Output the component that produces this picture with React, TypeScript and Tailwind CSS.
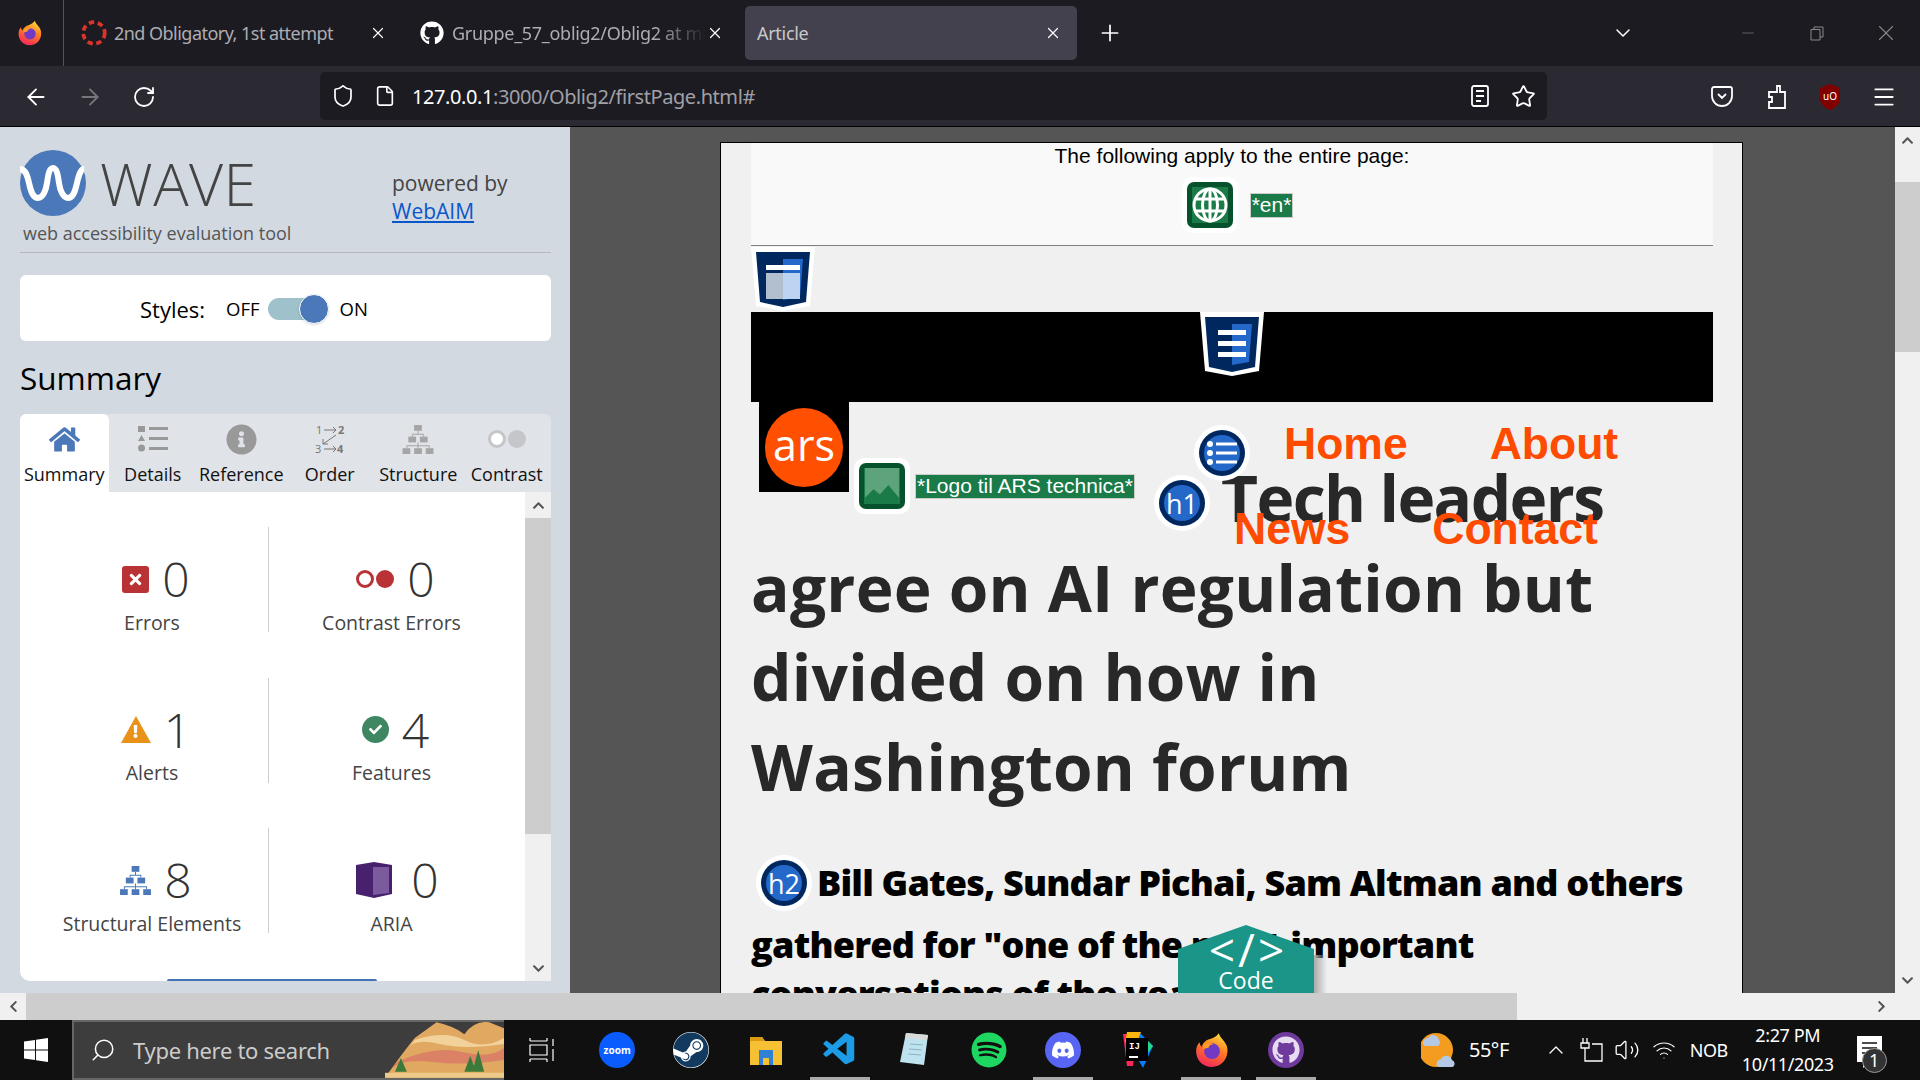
import type { ReactNode } from "react";
import { FaHome, FaInfoCircle, FaGithub, FaSpotify, FaDiscord, FaSteam, FaChevronUp, FaChevronDown, FaChevronLeft, FaChevronRight, FaCheck, FaExclamation, FaTimes } from "react-icons/fa";
import { VscVscode } from "react-icons/vsc";
import { ArrowLeft, ArrowRight, RotateCw, Shield, File, Star, Search, Menu, X, Plus, ChevronDown, ChevronUp, Minus, Volume2, Wifi } from "lucide-react";

function Firefox({ size = 24 }: { size?: number }) {
  return (
    <svg width={size} height={size} viewBox="0 0 32 32">
      <defs>
        <linearGradient id="ffx" x1="0.7" y1="0" x2="0.3" y2="1">
          <stop offset="0" stopColor="#ffd93b" />
          <stop offset="0.45" stopColor="#ff7a22" />
          <stop offset="1" stopColor="#f5255e" />
        </linearGradient>
      </defs>
      <path d="M22 1c1 4 5 6 7 11 3 9-3 19-13 19C7 31 1 24 2 15c.5-3 2-5 3-6 0 2 1 3 2 4 1-4 4-6 8-7 2-1 5-2 7-5z" fill="url(#ffx)" />
      <circle cx="16" cy="17" r="7" fill="#7139c4" />
      <path d="M8 11c3-2 7-2 9 0-2 0-4 1-4 3l-5 1z" fill="#ff9a24" />
    </svg>
  );
}

function Shield2({ variant }: { variant: "page" | "nav" }) {
  return (
    <svg width="64" height="64" viewBox="0 0 64 64">
      <path d="M0 0H64L59 59L32 64L5 59Z" fill="#fff" />
      <path d="M5 5H59L55 55L32 60L9 55Z" fill="#00285f" />
      <path d="M32 12H52L49 50L32 53Z" fill="#2468c9" />
      {variant === "page" ? (
        <g>
          <rect x="15" y="18" width="34" height="5" fill="#fff" />
          <rect x="15" y="26" width="17" height="26" fill="#b2bfcf" />
          <rect x="32" y="26" width="17" height="26" fill="#bcd3f2" />
        </g>
      ) : (
        <g fill="#fff">
          <rect x="18" y="18" width="28" height="5" />
          <rect x="18" y="29" width="28" height="5" />
          <rect x="18" y="40" width="28" height="5" />
        </g>
      )}
    </svg>
  );
}

function GreenIcon({ children }: { children: ReactNode }) {
  return (
    <div className="w-[56px] h-[56px] shrink-0 rounded-[10px] bg-white p-[5px]">
      <div className="w-full h-full rounded-[7px] bg-[#06522c] p-[5px]">
        <div className="w-full h-full bg-[#1a7a48] flex items-center justify-center overflow-hidden">{children}</div>
      </div>
    </div>
  );
}

function RoundIcon({ children }: { children: ReactNode }) {
  return (
    <div className="w-[56px] h-[56px] rounded-full bg-white p-[5px]">
      <div className="w-full h-full rounded-full bg-[#00285f] p-[5px]">
        <div className="w-full h-full rounded-full bg-[#2468c9] flex items-center justify-center text-white text-[27px] leading-none font-['Open_Sans',sans-serif] font-normal tracking-normal">
          {children}
        </div>
      </div>
    </div>
  );
}

function TabClose() {
  return <X size={18} strokeWidth={1.6} className="text-white" />;
}

function SummaryCell({ icon, value, label, border, gap = "gap-[13px]" }: { icon: ReactNode; value: string; label: string; border?: boolean; gap?: string }) {
  return (
    <div className={`h-[105px] flex flex-col items-center ${border ? "border-l border-[#cccccc]" : ""}`}>
      <div className={`flex items-center ${gap} h-[62px] mt-[22px] pl-[8px]`}>
        {icon}
        <span className="text-[48px] leading-none font-light text-[#333]">{value}</span>
      </div>
      <span className="text-[19.5px] leading-none text-[#444] mt-[3px]">{label}</span>
    </div>
  );
}

function Hierarchy({ color, width, height }: { color: string; width: number; height: number }) {
  return (
    <svg width={width} height={height} viewBox="0 0 32 30" fill={color}>
      <rect x="12" y="0" width="8" height="6" />
      <rect x="6" y="12" width="8" height="6" />
      <rect x="18" y="12" width="8" height="6" />
      <rect x="0" y="24" width="8" height="6" />
      <rect x="12" y="24" width="8" height="6" />
      <rect x="24" y="24" width="8" height="6" />
      <path d="M16 6v3M10 9h12v3h-1v-2H11v2h-1zM4 21h24v3h-1v-2H5v2H4zM15.500 18h1v6h-1zM15.500 6h1v4h-1z" />
    </svg>
  );
}

function ContrastDots({ ring, fill }: { ring: string; fill: string }) {
  return (
    <div className="flex items-center gap-[2px]">
      <div className="w-[18px] h-[18px] rounded-full border-[3px] bg-white" style={{ borderColor: ring }} />
      <div className="w-[18px] h-[18px] rounded-full" style={{ backgroundColor: fill }} />
    </div>
  );
}

const tabs: { label: string; icon: ReactNode }[] = [
  { label: "Summary", icon: <FaHome size={31} className="text-[#4a78b8]" /> },
  {
    label: "Details",
    icon: (
      <svg width="30" height="30" viewBox="0 0 30 30" fill="#999">
        <rect x="0" y="2" width="7" height="6" />
        <path d="M3.500 11L7 17H0z" />
        <circle cx="3.500" cy="24" r="3.500" />
        <rect x="11" y="3" width="19" height="3" />
        <rect x="11" y="13" width="19" height="3" />
        <rect x="11" y="23" width="19" height="3" />
      </svg>
    ),
  },
  { label: "Reference", icon: <FaInfoCircle size={31} className="text-[#999]" /> },
  {
    label: "Order",
    icon: (
      <svg width="30" height="30" viewBox="0 0 30 30" fill="#777" stroke="none" fontFamily="Open Sans, sans-serif" fontSize="11">
        <text x="1" y="10">1</text>
        <text x="23" y="10" fontWeight="700">2</text>
        <text x="0" y="29">3</text>
        <text x="22" y="29" fontWeight="700">4</text>
        <path d="M9 6h12M18 3l3 3-3 3M9 25h12M18 22l3 3-3 3M21 11L8 20M8 15v5h5" fill="none" stroke="#777" strokeWidth="1" />
      </svg>
    ),
  },
  { label: "Structure", icon: <Hierarchy color="#a5a5a5" width={32} height={29} /> },
  {
    label: "Contrast",
    icon: <ContrastDots ring="#c4c6c9" fill="#c4c6c9" />,
  },
];

function Sidebar() {
  return (
    <aside className="w-[570px] shrink-0 bg-[#d3d9e1] px-[20px] pr-[19px] font-['Open_Sans',sans-serif]">
      <div className="h-[126px] border-b border-[#b5b9be] flex">
        <div className="w-[372px] pt-[23px]">
          <div className="flex items-center h-[65px]">
            <svg width="66" height="66" viewBox="0 0 66 66">
              <circle cx="33" cy="33" r="33" fill="#4a78b8" />
              <path d="M1 18c5 0 7 5 9 14s4 15 9 15 8-8 9-15 2-15 6-15 5 8 6 15 4 15 9 15 7-6 9-15 4-14 7-14" transform="translate(-1 1)" fill="none" stroke="#fff" strokeWidth="6" />
            </svg>
            <span className="ml-[14px] mt-[2px] text-[59px] leading-none font-light text-[#444] tracking-[0.5px]">WAVE</span>
          </div>
          <div className="ml-[3px] mt-[6px] text-[18px] leading-[24px] text-[#555]">web accessibility evaluation tool</div>
        </div>
        <div className="pt-[42px] text-[21px] leading-[28px] text-[#444]">
          <div>powered by</div>
          <div className="text-[#0b57c9] underline">WebAIM</div>
        </div>
      </div>

      <div className="mt-[22px] h-[66px] pt-[2px] rounded-[6px] bg-white flex items-center text-black">
        <span className="ml-[120px] text-[22px]">Styles:</span>
        <span className="ml-[21px] text-[18.500px]">OFF</span>
        <div className="relative ml-[8px] w-[58px] h-[22px] rounded-full bg-[#9fc1cc]">
          <div className="absolute right-[-3px] top-[-4px] w-[30px] h-[30px] rounded-full bg-[#4a78b8] border border-white shadow" />
        </div>
        <span className="ml-[14px] text-[18.500px]">ON</span>
      </div>

      <h2 className="mt-[15px] text-[31.500px] leading-[44px] text-black">Summary</h2>

      <div className="mt-[14px] h-[78px] rounded-t-[6px] bg-[#e0e3e8] grid grid-cols-6">
        {tabs.map((tab, i) => (
          <div key={tab.label} className={`flex flex-col items-center ${i === 0 ? "bg-white rounded-t-[6px]" : ""}`}>
            <div className="h-[32px] mt-[9px] flex items-center justify-center">{tab.icon}</div>
            <span className="mt-[8px] text-[18px] leading-[22px] text-[#111] whitespace-nowrap">{tab.label}</span>
          </div>
        ))}
      </div>

      <div className="h-[489px] flex">
        <div className="relative w-[505px] bg-white rounded-bl-[10px] pl-[16px] pr-[11px] pt-[35px] overflow-hidden">
          <div className="grid grid-cols-[232px_246px] gap-y-[45.500px]">
            <SummaryCell
              value="0"
              label="Errors"
              icon={
                <div className="w-[27px] h-[27px] rounded-[3px] bg-[#b83236] flex items-center justify-center">
                  <FaTimes size={17} className="text-white" />
                </div>
              }
            />
            <SummaryCell border value="0" label="Contrast Errors" icon={<ContrastDots ring="#b83236" fill="#b83236" />} />
            <SummaryCell
              value="1"
              label="Alerts"
              icon={
                <div className="relative w-[30px] h-[27px]">
                  <svg width="30" height="27" viewBox="0 0 30 27">
                    <path d="M15 0L30 27H0z" fill="#e8921a" />
                  </svg>
                  <FaExclamation size={13} className="absolute left-[8.500px] top-[9px] text-white" />
                </div>
              }
            />
            <SummaryCell
              border
              value="4"
              label="Features"
              icon={
                <div className="w-[27px] h-[27px] rounded-full bg-[#3f8763] flex items-center justify-center">
                  <FaCheck size={13} className="text-white" />
                </div>
              }
            />
            <SummaryCell value="8" label="Structural Elements" icon={<Hierarchy color="#4a78b8" width={31} height={29} />} />
            <SummaryCell
              border
              value="0"
              label="ARIA"
              gap="gap-[19px]"
              icon={
                <svg className="ml-[4px]" width="36" height="36" viewBox="0 0 36 36">
                  <path d="M0 3L18 0l18 3v29l-18 4-18-4z" fill="#47206e" />
                  <path d="M17 5l16-0v26l-16 2z" fill="#7b5a9e" />
                </svg>
              }
            />
          </div>
          <div className="absolute left-[147px] bottom-0 w-[210px] h-[2px] rounded-t bg-[#4472b5]" />
        </div>
        <div className="w-[26px] bg-[#f0f0f0] flex flex-col">
          <div className="h-[26px] flex items-center justify-center">
            <FaChevronUp size={13} className="text-[#555]" />
          </div>
          <div className="h-[316px] bg-[#cdcdcd]" />
          <div className="flex-1" />
          <div className="h-[26px] flex items-center justify-center">
            <FaChevronDown size={13} className="text-[#555]" />
          </div>
        </div>
      </div>
    </aside>
  );
}

function Article() {
  return (
    <main className="relative flex-1 bg-[#555555] overflow-hidden pt-[15px] pl-[150px]">
      <div className="w-[1023px] h-[1000px] border border-black bg-[#f0f0f0] pl-[30px] pr-[29px]">
        <div className="h-[103px] bg-[#f9f9f9] border-b border-[#808080] flex flex-col items-center font-['Liberation_Sans',sans-serif] text-black">
          <p className="text-[21px] leading-[24px] mt-[1px] whitespace-nowrap">The following apply to the entire page:</p>
          <div className="flex items-center gap-[12px] mt-[9px] ml-[11px]">
            <GreenIcon>
              <svg width="36" height="36" viewBox="0 0 36 36" fill="none" stroke="#fff" strokeWidth="3">
                <circle cx="18" cy="18" r="16" />
                <ellipse cx="18" cy="18" rx="7.500" ry="16" />
                <path d="M4 12H32M4 24H32M18 2V34" />
              </svg>
            </GreenIcon>
            <span className="h-[25px] px-[1px] bg-[#1a7a48] border border-[#ccc] text-white text-[21px] leading-[22px]">*en*</span>
          </div>
        </div>

        <div className="h-[66px] pt-[1px]">
          <Shield2 variant="page" />
        </div>
        <div className="h-[90px] bg-black flex justify-center">
          <Shield2 variant="nav" />
        </div>

        <div className="relative">
          <div className="absolute left-[8px] top-0 w-[90px] h-[90px] bg-black flex items-center justify-center">
            <div className="w-[78px] h-[79px] rounded-full bg-[#ff4f00] flex items-center justify-center text-white text-[43px] leading-none font-['Open_Sans',sans-serif] pb-[5px]">
              ars
            </div>
          </div>
          <div className="absolute left-[103px] top-[56px] flex items-center gap-[5px] font-['Liberation_Sans',sans-serif]">
            <GreenIcon>
              <svg width="34" height="36" viewBox="0 0 32 34">
                <rect width="32" height="34" fill="#5da37c" />
                <path d="M0 34V28L8 20L14 25L22 16L32 28V34Z" fill="#1a7a48" />
              </svg>
            </GreenIcon>
            <span className="h-[25px] px-[1px] bg-[#1a7a48] border border-[#ccc] text-white text-[21px] leading-[22px] whitespace-nowrap">*Logo til ARS technica*</span>
          </div>

          <h1 className="pt-[51px] text-[64px] leading-[89.600px] font-bold text-[#282828] indent-[470px] font-['Open_Sans',sans-serif] tracking-[0.250px]">
            <span className="tracking-[-1.600px]">Tech leaders</span>
            <br />
            agree on AI regulation but
            <br />
            divided on how in
            <br />
            Washington forum
          </h1>

          <div className="absolute left-[533px] top-[17px] font-['Liberation_Sans',sans-serif] font-bold text-[44.500px] leading-[50px] text-[#ff4b00] whitespace-nowrap">
            <div>
              Home<span className="ml-[82px]">About</span>
            </div>
            <div className="-ml-[50px] mt-[35px]">
              News<span className="ml-[82px]">Contact</span>
            </div>
          </div>
          <div className="absolute left-[443px] top-[23px]">
            <RoundIcon>
              <svg width="30" height="24" viewBox="0 0 30 24" fill="#fff">
                <circle cx="3" cy="3" r="3" />
                <circle cx="3" cy="12" r="3" />
                <circle cx="3" cy="21" r="3" />
                <rect x="9" y="1.500" width="21" height="3" />
                <rect x="9" y="10.500" width="21" height="3" />
                <rect x="9" y="19.500" width="21" height="3" />
              </svg>
            </RoundIcon>
          </div>
          <div className="absolute left-[403px] top-[73px]">
            <RoundIcon>h1</RoundIcon>
          </div>

          <div className="relative mt-[41px]">
            <h2 className="text-[36px] font-extrabold text-black font-['Open_Sans',sans-serif] tracking-[-0.800px] whitespace-nowrap">
              <span className="block leading-[62px] indent-[66px]">Bill Gates, Sundar Pichai, Sam Altman and others</span>
              <span className="block leading-[62px]">gathered for "one of the most important</span>
              <span className="block leading-[36px]">conversations of the year"</span>
            </h2>
            <div className="absolute left-[5px] top-[3px]">
              <RoundIcon>h2</RoundIcon>
            </div>
          </div>
        </div>
      </div>

      <div className="absolute left-[744px] top-[828px] w-[13px] h-[60px] bg-gradient-to-r from-[#aaaaaa] to-transparent" />
      <div className="absolute left-[608px] top-[798px] w-[136px] h-[90px] bg-[#1a9588] [clip-path:polygon(50%_0,100%_24px,100%_100%,0_100%,0_24px)] flex flex-col items-center text-white font-['Open_Sans',sans-serif]">
        <span className="text-[46px] leading-none mt-[1px] pl-[4px] tracking-[3px]">&lt;/&gt;</span>
        <span className="text-[23px] leading-none -mt-[3px]">Code</span>
      </div>
    </main>
  );
}

function Taskbar() {
  const slots: { x: string; node: ReactNode; active?: boolean }[] = [
    {
      x: "zoom",
      node: (
        <div className="w-[36px] h-[36px] rounded-full bg-[#0b5cff] flex items-center justify-center text-white text-[10px] font-bold">zoom</div>
      ),
    },
    {
      x: "steam",
      node: (
        <div className="w-[36px] h-[36px] rounded-full bg-white flex items-center justify-center">
          <FaSteam size={36} className="text-[#123a5e]" />
        </div>
      ),
    },
    {
      x: "files",
      node: (
        <svg width="32" height="32" viewBox="0 0 32 32">
          <path d="M0 3h12l3 4h17v24H0z" fill="#f5c033" />
          <path d="M0 3h12l3 4H0z" fill="#d99a14" />
          <rect x="9" y="16" width="14" height="15" fill="#2e82d6" />
          <rect x="13" y="24" width="6" height="7" fill="#f5c033" />
        </svg>
      ),
    },
    { x: "code", active: true, node: <VscVscode size={38} className="text-[#1c9be6]" /> },
    {
      x: "notepad",
      node: (
        <svg width="32" height="36" viewBox="0 0 32 36">
          <path d="M8 1L30 3L26 33L2 30z" fill="#bfe3ee" />
          <path d="M8 1L30 3L29 8L7 6z" fill="#d9d9d9" />
          <path d="M12 12L25 13M11 17L24 18M10 22L23 23" stroke="#8ab4c2" />
        </svg>
      ),
    },
    { x: "spotify", node: <FaSpotify size={36} className="text-[#1ed760]" /> },
    {
      x: "discord",
      active: true,
      node: (
        <div className="w-[36px] h-[36px] rounded-full bg-[#5865f2] flex items-center justify-center">
          <FaDiscord size={24} className="text-white" />
        </div>
      ),
    },
    {
      x: "idea",
      node: (
        <svg width="36" height="36" viewBox="0 0 36 36">
          <path d="M4 2h14l-4 32H8z" fill="#fe2857" />
          <path d="M20 0l14 14-10 22-8-14z" fill="#087cfa" />
          <path d="M26 6l8 8-6 8z" fill="#21d789" />
          <path d="M8 0h14l-4 10H6z" fill="#fdb60d" />
          <rect x="7" y="6" width="22" height="23" fill="#000" />
          <text x="10" y="17" fontSize="9" fontWeight="700" fill="#fff" fontFamily="Liberation Mono, monospace">IJ</text>
          <rect x="10" y="24" width="9" height="2" fill="#fff" />
        </svg>
      ),
    },
    { x: "firefox", active: true, node: <Firefox size={36} /> },
    {
      x: "github",
      active: true,
      node: (
        <div className="w-[36px] h-[36px] rounded-full bg-[#6e3a9e] flex items-center justify-center">
          <FaGithub size={28} className="text-[#e8dcf2]" />
        </div>
      ),
    },
  ];
  return (
    <footer className="h-[60px] bg-[#101010] flex text-white font-['Noto_Sans',sans-serif]">
      <div className="w-[72px] flex items-center justify-center">
        <svg width="24" height="24" viewBox="0 0 24 24" fill="#fff">
          <path d="M0 3.500L11 2V11.500H0ZM12 1.800L24 0V11.500H12ZM0 12.500H11V22L0 20.500ZM12 12.500H24V24L12 22.200Z" />
        </svg>
      </div>
      <div className="relative w-[432px] border-2 border-[#666] border-r-0 bg-[#3d3d3d] flex items-center overflow-hidden">
        <Search size={26} strokeWidth={1.4} className="ml-[16px] -scale-x-100 text-white" />
        <span className="ml-[17px] text-[22px] text-[#ccc] tracking-[-0.300px]">Type here to search</span>
        <svg className="absolute right-0 bottom-0" width="119" height="58" viewBox="0 0 120 58">
          <path d="M0 58Q20 30 30 18L52 2Q70 6 80 14Q90 0 105 2L120 8V58Z" fill="#e0a860" />
          <path d="M12 42Q50 25 78 32T120 28V40Q80 46 48 42T6 50Z" fill="#d9706a" opacity="0.7" />
          <path d="M30 20Q60 10 80 20T120 18V24Q80 30 55 24T24 28Z" fill="#f2d29a" />
          <path d="M10 52L16 38L22 52ZM80 52L86 36L92 52ZM88 52L94 30L100 52Z" fill="#3c7a3a" />
          <rect y="53" width="120" height="5" fill="#edc98a" />
        </svg>
      </div>
      <div className="w-[74px] flex items-center justify-center">
        <svg width="25" height="24" viewBox="0 0 25 24" fill="none" stroke="#fff" strokeWidth="1.2">
          <path d="M1 3H18M1 0V3M18 0V3M1 7H18V17H1ZM1 21H18M1 24V21M18 24V21M24 1V8M24 11V23" />
        </svg>
      </div>
      <div className="flex ml-[2px]">
        {slots.map((slot) => (
          <div key={slot.x} className="relative w-[74.300px] flex items-center justify-center">
            {slot.node}
            {slot.active && <div className="absolute bottom-0 left-[7px] w-[60px] h-[3px] bg-[#aaaaaa]" />}
          </div>
        ))}
      </div>

      <div className="ml-[98px] flex items-center w-[48px]">
        <svg width="36" height="40" viewBox="0 0 36 40">
          <circle cx="15" cy="20" r="17" fill="#f39c1f" />
          <path d="M2 14a5 5 0 0 1 5-6 6 6 0 0 1 11 2 4 4 0 0 1-1 6H4a3 3 0 0 1-2-2zM16 36a5 5 0 0 1 4-7 6 6 0 0 1 11 1 4 4 0 0 1 1 7H18z" fill="#b4c9e6" />
        </svg>
      </div>
      <span className="flex items-center text-[20px] tracking-[-0.500px]">55°F</span>
      <ChevronUp size={24} strokeWidth={1.3} className="ml-[35px] self-center" />
      <svg className="ml-[11px] self-center" width="24" height="26" viewBox="0 0 24 26" fill="none" stroke="#fff" strokeWidth="1.3">
        <path d="M4 1V6M8 1V6M2 6H10V11H2ZM6 11V24H23V7H13" />
      </svg>
      <Volume2 size={26} strokeWidth={1.2} className="ml-[11px] self-center" />
      <Wifi size={24} strokeWidth={1.2} className="ml-[12px] self-center" />
      <span className="ml-[14px] flex items-center text-[18px] tracking-[-0.500px]">NOB</span>
      <div className="ml-[11px] w-[98px] flex flex-col items-center justify-center text-[18px] leading-[29px] tracking-[-0.400px]">
        <span>2:27 PM</span>
        <span>10/11/2023</span>
      </div>
      <div className="relative ml-[14px] w-[36px]">
        <svg className="absolute left-[6px] top-[16px]" width="25" height="32" viewBox="0 0 25 32" fill="#fff">
          <path d="M0 0H25V26H12L6 32V26H0Z" />
          <path d="M5 7H20M5 12H20M5 17H16" stroke="#101010" strokeWidth="1.500" />
        </svg>
        <div className="absolute left-[11px] top-[28px] w-[25px] h-[25px] rounded-full bg-[#333] border border-[#999] flex items-center justify-center text-[18px]">1</div>
      </div>
    </footer>
  );
}

export default function App() {
  return (
    <div className="w-[1920px] h-[1080px] overflow-hidden flex flex-col font-['Noto_Sans',sans-serif]">
      <header className="h-[66px] bg-[#1c1b22] flex items-stretch text-[18px] tracking-[-0.300px]">
        <div className="w-[64px] flex items-center justify-center border-r border-[#55545c] pr-[3px]">
          <Firefox size={26} />
        </div>
        <div className="w-[340px] flex items-center text-[#adadb3]">
          <svg className="ml-[17px]" width="26" height="28" viewBox="0 0 24 26" fill="none" stroke="#d9352b" strokeWidth="3.500" strokeDasharray="5 3.400">
            <circle cx="12" cy="13" r="10" />
          </svg>
          <span className="ml-[7px] w-[255px] whitespace-nowrap tracking-[-0.530px]">2nd Obligatory, 1st attempt</span>
          <TabClose />
        </div>
        <div className="w-[341px] flex items-center text-[#adadb3]">
          <FaGithub size={24} className="ml-[16px] text-white" />
          <span className="ml-[8px] w-[254px] whitespace-nowrap overflow-hidden [mask-image:linear-gradient(to_right,black_80%,transparent)]">Gruppe_57_oblig2/Oblig2 at main</span>
          <TabClose />
        </div>
        <div className="my-[6px] w-[332px] rounded-[5px] bg-[#42414d] flex items-center justify-between pl-[12px] pr-[15px] text-[#c8c8cc]">
          <span>Article</span>
          <TabClose />
        </div>
        <div className="w-[66px] flex items-center justify-center">
          <Plus size={26} strokeWidth={1.6} className="text-white" />
        </div>
        <div className="ml-[468px] w-[24px] flex items-center justify-center">
          <ChevronDown size={28} strokeWidth={1.5} className="text-white" />
        </div>
        <div className="ml-[98px] w-[30px] flex items-center justify-center">
          <Minus size={18} strokeWidth={1} className="text-[#777]" />
        </div>
        <div className="ml-[39px] w-[30px] flex items-center justify-center">
          <svg width="14" height="15" viewBox="0 0 14 15" fill="none" stroke="#888">
            <path d="M1 3.500H10V14H1ZM4 3.500V1H13V11H10" />
          </svg>
        </div>
        <div className="ml-[39px] w-[30px] flex items-center justify-center">
          <X size={26} strokeWidth={1} className="text-[#888]" />
        </div>
      </header>

      <nav className="h-[61px] bg-[#2b2a33] border-b border-black flex items-center text-white">
        <ArrowLeft size={26} strokeWidth={1.7} className="ml-[23px] mt-[2px]" />
        <ArrowRight size={26} strokeWidth={1.7} className="ml-[28px] mt-[2px] text-[#77767d]" />
        <RotateCw size={24} strokeWidth={1.8} className="ml-[29px] mt-[2px]" />
        <div className="ml-[164px] w-[1227px] h-[48px] rounded-[5px] bg-[#1c1b22] flex items-center">
          <Shield size={24} strokeWidth={1.7} className="ml-[11px]" />
          <File size={22} strokeWidth={1.8} className="ml-[19px]" />
          <span className="ml-[16px] mt-[1px] text-[20px] tracking-[-0.420px] whitespace-nowrap">
            127.0.0.1<span className="text-[#a0a0a6]">:3000/Oblig2/firstPage.html#</span>
          </span>
          <svg className="ml-auto" width="18" height="22" viewBox="0 0 18 22" fill="none" stroke="#fff" strokeWidth="1.800">
            <rect x="1" y="1" width="16" height="20" rx="2" />
            <path d="M5 6H13M5 11H13M5 16H10" />
          </svg>
          <Star size={25} strokeWidth={1.7} className="ml-[22px] mr-[11px]" />
        </div>
        <svg className="ml-[164px] mt-[2px]" width="22" height="22" viewBox="0 0 22 22" fill="none" stroke="#fff" strokeWidth="1.800">
          <path d="M1 3a2 2 0 0 1 2-2h16a2 2 0 0 1 2 2v7a10 10 0 0 1-20 0zM7 8l4 4 4-4" />
        </svg>
        <svg className="ml-[33px] mt-[2px]" width="20" height="24" viewBox="0 0 20 24" fill="none" stroke="#fff" strokeWidth="1.800">
          <path d="M11 1h3v6h5v16H3v-6h3v-5H3V7h8z" />
        </svg>
        <svg className="ml-[34px] mt-[2px]" width="20" height="26" viewBox="0 0 20 26">
          <path d="M10 0L20 4V15C20 20 15 24 10 26C5 24 0 20 0 15V4Z" fill="#800000" />
          <text x="10" y="16" textAnchor="middle" fontSize="10" fill="#fff" fontFamily="Noto Sans, sans-serif">uO</text>
        </svg>
        <Menu size={26} strokeWidth={1.7} className="ml-[31px] mt-[2px]" />
      </nav>

      <div className="h-[866px] flex">
        <Sidebar />
        <Article />
        <div className="w-[25px] bg-[#f0f0f0] flex flex-col">
          <div className="h-[26px] flex items-center justify-center">
            <FaChevronUp size={13} className="text-[#555]" />
          </div>
          <div className="h-[29px]" />
          <div className="h-[170px] bg-[#cdcdcd]" />
          <div className="flex-1" />
          <div className="h-[26px] flex items-center justify-center">
            <FaChevronDown size={13} className="text-[#555]" />
          </div>
        </div>
      </div>

      <div className="h-[27px] bg-[#f0f0f0] flex">
        <div className="w-[26px] flex items-center justify-center">
          <FaChevronLeft size={13} className="text-[#555]" />
        </div>
        <div className="w-[1491px] bg-[#cdcdcd]" />
        <div className="flex-1 flex items-center justify-end pr-[32px]">
          <FaChevronRight size={13} className="text-[#555]" />
        </div>
      </div>
      <Taskbar />
    </div>
  );
}
